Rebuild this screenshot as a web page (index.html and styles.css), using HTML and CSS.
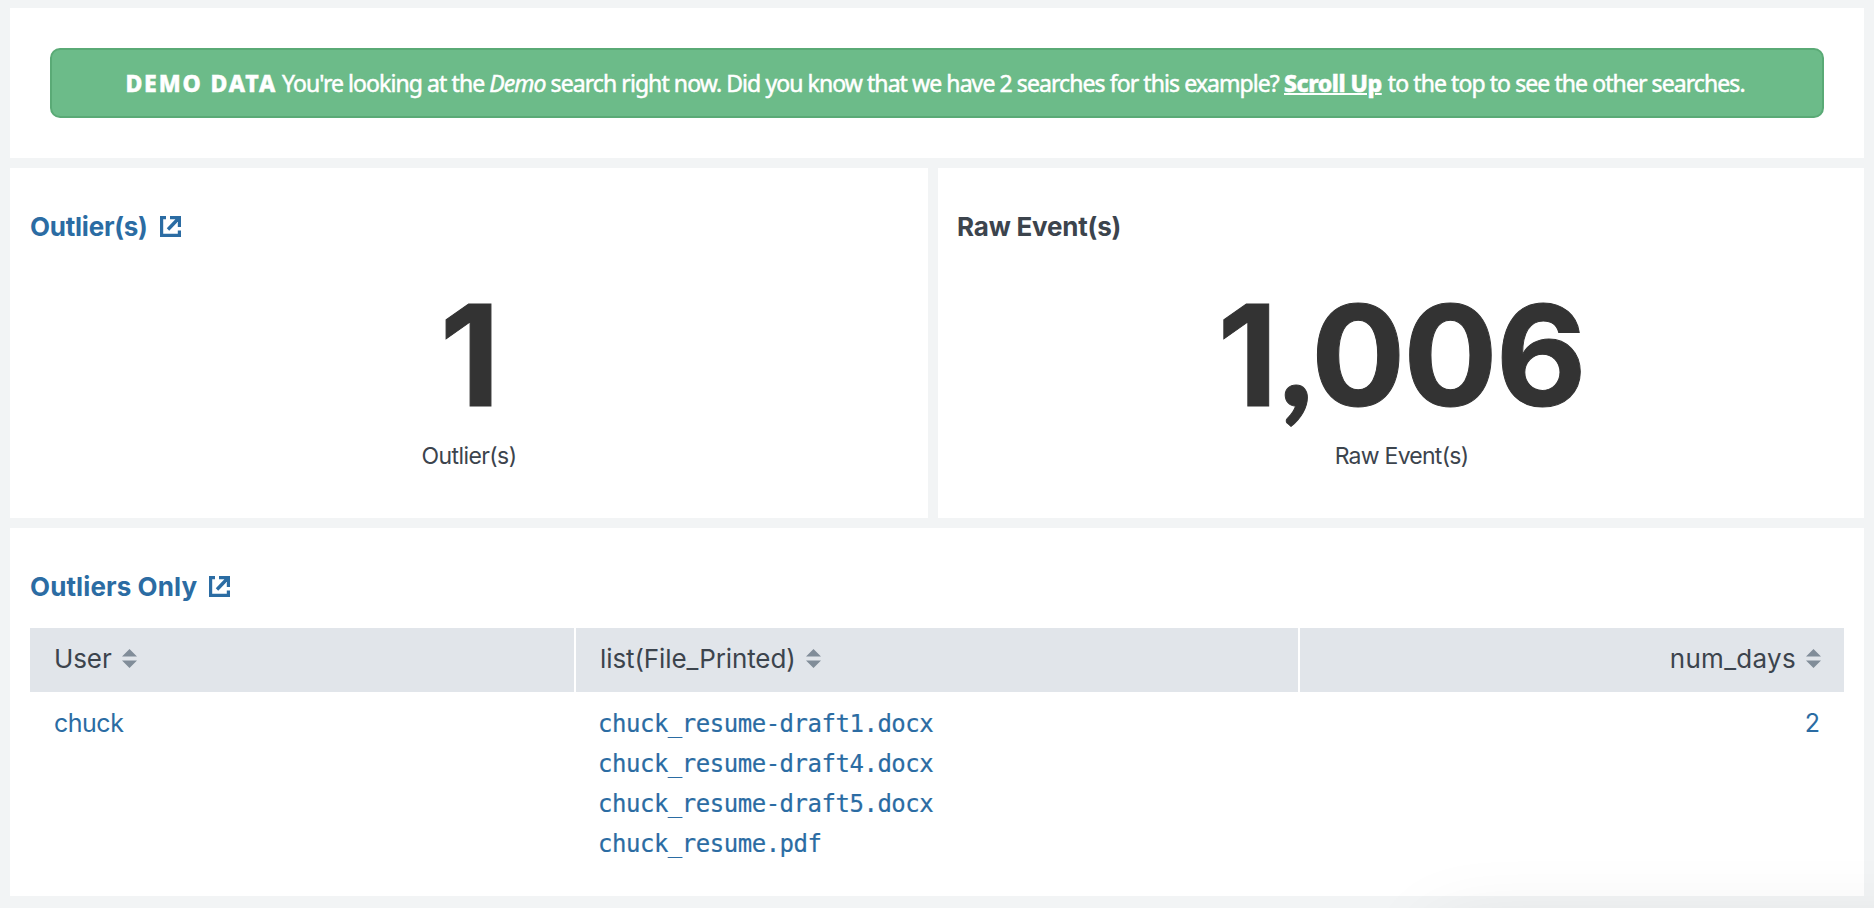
FILE: index.html
```html
<!DOCTYPE html>
<html lang="en">
<head>
<meta charset="utf-8">
<title>Outliers dashboard</title>
<link rel="stylesheet" href="styles.css">
</head>
<body>
<main class="dashboard">
  <section class="panel banner-panel">
    <div class="alert"><p class="alert-text"><strong class="tag">DEMO DATA</strong> You're looking at the <em>Demo</em> search right now. Did you know that we have 2 searches for this example? <a class="scroll-up">Scroll Up</a> to the top to see the other searches.</p></div>
  </section>
  <div class="row">
    <section class="panel single">
      <h2 class="title link"><span class="t-outlier">Outlier(s)</span><svg class="ext" viewBox="0 0 21 21"><path d="M6 1.5H1.5V19.5H19.5V14.5M10 1.5H19.5V11M19 2L8 13.5"/></svg></h2>
      <div class="number">1</div>
      <div class="label l-outlier">Outlier(s)</div>
    </section>
    <section class="panel single">
      <h2 class="title"><span class="t-raw">Raw Event(s)</span></h2>
      <div class="number">1<span class="comma">,</span>006</div>
      <div class="label l-raw">Raw Event(s)</div>
    </section>
  </div>
  <section class="panel table-panel">
    <h2 class="title link"><span class="t-only">Outliers Only</span><svg class="ext" viewBox="0 0 21 21"><path d="M6 1.5H1.5V19.5H19.5V14.5M10 1.5H19.5V11M19 2L8 13.5"/></svg></h2>
    <div class="grid head">
      <div class="th"><span class="h-user">User</span><svg class="sort" viewBox="0 0 15 19"><path d="M0 7.5L7.5 0L15 7.5ZM0 11.5H15L7.5 19Z"/></svg></div>
      <div class="th"><span class="h-list">list(File_Printed)</span><svg class="sort" viewBox="0 0 15 19"><path d="M0 7.5L7.5 0L15 7.5ZM0 11.5H15L7.5 19Z"/></svg></div>
      <div class="th right"><span class="h-days">num_days</span><svg class="sort" viewBox="0 0 15 19"><path d="M0 7.5L7.5 0L15 7.5ZM0 11.5H15L7.5 19Z"/></svg></div>
    </div>
    <div class="grid body">
      <div class="td"><span class="chuck">chuck</span></div>
      <div class="td mono"><div>chuck_resume-draft1.docx</div><div>chuck_resume-draft4.docx</div><div>chuck_resume-draft5.docx</div><div>chuck_resume.pdf</div></div>
      <div class="td right">2</div>
    </div>
  </section>
  <div class="shade"><div class="corner-shadow"></div></div>
</main>
</body>
</html>
```

FILE: styles.css
```css
* { box-sizing: border-box; }
body {
  margin: 0;
  background: #f2f4f5;
  color: #3c444d;
  font-family: Inter, "Liberation Sans", sans-serif;
}
.dashboard {
  position: relative;
  display: flex;
  flex-direction: column;
  gap: 10px;
  padding: 8px 10px 12px;
  height: 908px;
  overflow: hidden;
}
.panel { background: #fff; }
.banner-panel { height: 150px; padding: 40px; }
.alert {
  height: 70px;
  display: flex;
  align-items: center;
  justify-content: center;
  border: 2px solid #5aaa76;
  border-radius: 10px;
  background: #6cbb89;
  color: #fff;
}
.alert-text {
  margin: 0 4px 0 0;
  font: 23px/40px "Noto Sans", "Open Sans", sans-serif;
  letter-spacing: -0.92px;
  white-space: nowrap;
  -webkit-text-stroke: 0.5px #fff;
}
.tag { font-weight: 800; letter-spacing: 1.85px; }
.scroll-up {
  margin-right: 1px;
  font-weight: 800;
  letter-spacing: -0.45px;
  text-decoration: underline;
  text-decoration-thickness: 2px;
}
.row { display: grid; grid-template-columns: 918px 926px; gap: 10px; height: 350px; }
.single { padding: 40px 20px 0; }
.title {
  display: flex;
  align-items: center;
  margin: 0;
  height: 38px;
  font-size: 26px;
  line-height: 38px;
  font-weight: 700;
  white-space: nowrap;
}
.link { color: #2b6ca3; }
.ext { width: 21px; height: 21px; margin: -1px 0 0 12px; fill: none; stroke: #2b6ca3; stroke-width: 3.4; }
.t-outlier { letter-spacing: -0.25px; }
.t-raw { letter-spacing: -0.2px; margin-left: -1px; }
.t-only { letter-spacing: 0.1px; }
.number {
  height: 150px;
  margin-top: 34px;
  text-align: center;
  font-size: 140px;
  line-height: 150px;
  font-weight: 700;
  letter-spacing: -2px;
  color: #333;
  -webkit-text-stroke: 1px #333;
}
.comma { margin: 0 0 0 4px; font-family: Lato, sans-serif; font-weight: 900; line-height: 1; }
.label { margin-top: 8px; height: 36px; text-align: center; font-size: 23px; line-height: 36px; }
.l-outlier { letter-spacing: -0.6px; }
.l-raw { padding-left: 1px; letter-spacing: -0.75px; }
.table-panel { height: 368px; padding: 40px 20px 0; }
.grid { display: grid; grid-template-columns: 544px 722px 544px; gap: 2px; }
.head { margin-top: 22px; height: 64px; }
.th {
  display: flex;
  align-items: center;
  padding: 0 23px 3px 24px;
  background: #e1e5ea;
  font-size: 26px;
}
.h-user { letter-spacing: -0.1px; }
.h-list { letter-spacing: -0.1px; }
.h-days { letter-spacing: 0.3px; }
.sort { width: 15px; height: 19px; margin-left: 10px; fill: #818d99; }
.right { justify-content: flex-end; text-align: right; }
.td { padding: 11px 24px 0; font-size: 25px; line-height: 40px; color: #2b6ca3; }
.chuck { letter-spacing: -0.5px; }
.mono {
  padding: 12px 0 0 22px;
  font-family: "DejaVu Sans Mono", monospace;
  font-size: 24px;
  letter-spacing: -0.48px;
  -webkit-text-stroke: 0.2px #2b6ca3;
}
/* Soft shadow cast by a floating window below the bottom-right corner */
.shade { position: absolute; inset: 0; overflow: hidden; pointer-events: none; contain: strict; }
.corner-shadow {
  position: absolute;
  left: 1435px;
  top: 930px;
  width: 700px;
  height: 200px;
  box-shadow: 0 0 80px rgba(0, 0, 0, 0.1);
}
```
